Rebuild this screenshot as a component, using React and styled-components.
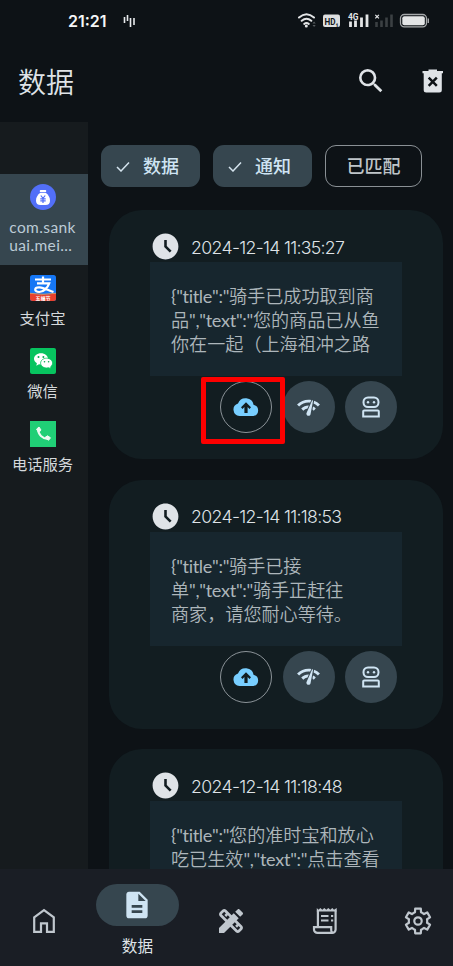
import React from "react";
import styled, { createGlobalStyle } from "styled-components";
import {
  MdSearch,
  MdAccessTimeFilled,
  MdNetworkCheck,
  MdDescription,
  MdDesignServices,
} from "react-icons/md";

const Global = createGlobalStyle`
  * { box-sizing: border-box; }
  body { margin: 0; background: #0d1216; overflow: hidden; }
  svg { display: block; flex: none; }
`;

const Screen = styled.div`
  width: 453px;
  height: 966px;
  display: flex;
  flex-direction: column;
  overflow: hidden;
  background: #0d1216;
  color: #dfe3e7;
  font-family: "Lato", "Noto Sans CJK SC", sans-serif;
  font-weight: 400;
  font-kerning: none;
`;

const StatusBar = styled.div`
  height: 42px;
  flex: none;
  display: flex;
  align-items: center;
  padding: 0 24px 0 68px;
`;

const Clock = styled.span`
  font: 600 16px/20px "Inter", sans-serif;
  letter-spacing: 0;
  color: #f4f6f7;
  width: 55px;
`;

const StatusIcons = styled.div`
  margin-left: auto;
  display: flex;
  align-items: center;
`;

const Header = styled.header`
  height: 80px;
  flex: none;
  display: flex;
  align-items: center;
  padding: 0 9px 0 18px;
`;

const Title = styled.h1`
  margin: 0;
  padding-bottom: 3px;
  font-size: 28px;
  line-height: 40px;
  font-weight: 350;
  font-family: "Noto Sans CJK SC", sans-serif;
  flex: 1;
`;

const Actions = styled.div`
  display: flex;
  align-items: center;
  gap: 35px;
  padding-bottom: 3px;
  color: #dfe3e7;
`;

const Body = styled.div`
  flex: 1;
  min-height: 0;
  display: flex;
`;

const Sidebar = styled.aside`
  width: 88px;
  flex: none;
  padding-top: 52px;
  background: #161b1e;
`;

const AppItem = styled.div`
  height: ${(p) => (p.$active ? 91 : 73)}px;
  padding-top: 10px;
  display: flex;
  flex-direction: column;
  align-items: center;
  gap: 8px;
  padding-right: 3px;
  background: ${(p) => (p.$active ? "#36464f" : "transparent")};
`;

const AppLabel = styled.div`
  font-size: ${(p) => (p.$latin ? 15.5 : 15.3)}px;
  line-height: 18px;
  letter-spacing: ${(p) => (p.$latin ? 0.4 : 0)}px;
  color: ${(p) => (p.$latin ? "#bccbd6" : "#d5d9dc")};
  white-space: pre;
`;

const Content = styled.main`
  flex: 1;
  min-width: 0;
  overflow: hidden;
  padding: 23px 10px 0 13px;
`;

const Chips = styled.div`
  display: flex;
  gap: 13px;
`;

const Chip = styled.div`
  width: ${(p) => (p.$selected ? 99 : 97)}px;
  height: 42px;
  display: flex;
  align-items: center;
  justify-content: ${(p) => (p.$selected ? "flex-start" : "center")};
  gap: 13px;
  padding-left: ${(p) => (p.$selected ? 15 : 0)}px;
  border-radius: 11px;
  border: ${(p) => (p.$selected ? "none" : "1px solid #8a9095")};
  background: ${(p) => (p.$selected ? "#36464f" : "transparent")};
  color: ${(p) => (p.$selected ? "#cfe4f3" : "#bfc5c9")};
  font-size: 18px;
  font-weight: 500;
  line-height: 24px;
`;

const Cards = styled.div`
  padding: 23px 0 0 8px;
  display: flex;
  flex-direction: column;
  gap: 20.6px;
`;

const Card = styled.article`
  height: 249px;
  flex: none;
  border-radius: 33px;
  background: #121d21;
  padding: 21px 41px 0;
`;

const CardHead = styled.div`
  height: 31px;
  display: flex;
  align-items: center;
  gap: 10px;
  color: #dfe3e7;
`;

const Time = styled.time`
  font-family: "Inter", sans-serif;
  font-weight: 300;
  font-size: 17.7px;
  line-height: 24px;
  letter-spacing: -0.7px;
  padding-top: 2px;
  white-space: nowrap;
`;

const Message = styled.div`
  height: 114px;
  padding: 22px 0 0 21px;
  background: #17262e;
  color: #adb6bb;
  font-size: 18.1px;
  font-weight: 350;
  line-height: 24px;
`;

const Line = styled.div`
  height: 24px;
  white-space: pre;
`;

const Latin = styled.span`
  font-weight: 400;
  letter-spacing: -0.32px;
`;

const Buttons = styled.div`
  display: flex;
  justify-content: flex-end;
  gap: 10.5px;
  padding: 5px 5px 0 0;
`;

const RoundButton = styled.div`
  position: relative;
  width: 52px;
  height: 52px;
  display: flex;
  align-items: center;
  justify-content: center;
  border-radius: 50%;
  border: ${(p) => (p.$outlined ? "1px solid #8b9398" : "none")};
  background: ${(p) => (p.$outlined ? "transparent" : "#36464f")};
  color: ${(p) => (p.$outlined ? "#78ceff" : "#cfe4f3")};
  z-index: ${(p) => (p.$outlined ? 1 : 0)};
`;

const Marker = styled.div`
  position: absolute;
  left: -20px;
  top: -5px;
  width: 84px;
  height: 67px;
  border: 5px solid #fd0000;
  border-radius: 2px;
`;

const Nav = styled.nav`
  height: 97px;
  flex: none;
  display: grid;
  grid-template-columns: repeat(5, 1fr);
  margin: 0 -12px 0 -3px;
  background: #1a1e25;
  color: #c0c7ce;
`;

const NavItem = styled.div`
  display: flex;
  flex-direction: column;
  align-items: center;
  padding-top: ${(p) => (p.$active ? 15 : 36)}px;
`;

const Pill = styled.div`
  width: 83px;
  height: 42px;
  display: flex;
  align-items: center;
  justify-content: center;
  border-radius: 21px;
  background: #36464f;
  color: #cfe4f3;
`;

const NavLabel = styled.div`
  margin-top: 9px;
  font-size: 15.6px;
  line-height: 22px;
  color: #dfe3e7;
`;

const Vibrate = () => (
  <svg width="12" height="14" viewBox="0 0 12 14" stroke="#e8ebed" strokeWidth="1.6">
    <path d="M1.500 3v6M4.500 1v6M7.500 4v9M11 4v7" />
  </svg>
);

const StatusGlyphs = () => (
  <svg width="134" height="18" viewBox="295 12.500 134 18">
    <g fill="none" stroke="#e3e5e6" strokeWidth="2" strokeLinecap="round">
      <path d="M299 18q7.500-6.500 15 0M301.700 21.300q4.800-4.200 9.600 0M304.200 24.400q2.300-1.900 4.600 0" />
    </g>
    <circle cx="306.300" cy="26.500" r="1.500" fill="#e3e5e6" />
    <path d="M312.500 24l1.600-2 1.600 2zM312.500 25.500l1.600 2 1.600-2z" fill="#555a5d" />
    <rect x="323" y="15" width="17" height="12.500" rx="2" fill="#dedfe0" />
    <text x="324.500" y="25" fontSize="9.500" fontWeight="700" fontFamily="Roboto, sans-serif" fill="#101519" textLength="14" lengthAdjust="spacingAndGlyphs">HD₁</text>
    <text x="348" y="20.300" fontSize="8.500" fontWeight="700" fontFamily="Roboto, sans-serif" fill="#e3e5e6" textLength="10.500" lengthAdjust="spacingAndGlyphs">4G</text>
    <path d="M350.500 22v5.500M355.500 21v6.500M361.500 18v9.500M367 15v12.500" stroke="#e3e5e6" strokeWidth="2.800" />
    <path d="M376.500 22.500v5M381.500 21v6.500M386.500 18v9.500M391.500 15v12.500" stroke="#3b4043" strokeWidth="2.600" />
    <path d="M375.300 15.300l3.600 3.600M378.900 15.300l-3.600 3.600" stroke="#e3e5e6" strokeWidth="1.200" />
    <rect x="400.500" y="15" width="26" height="12.300" rx="3.800" fill="none" stroke="#a6a9ab" strokeWidth="1.300" />
    <rect x="402.300" y="16.700" width="22.500" height="9" rx="2" fill="#e3e5e6" />
    <path d="M428.300 19v4.500" stroke="#a6a9ab" strokeWidth="1.400" />
  </svg>
);

const TrashX = () => (
  <svg width="22" height="24" viewBox="0 0 22 24">
    <path fill="currentColor" fillRule="evenodd" d="M.5 2h6V.6h8.500V2h6v2.200h-1.200V21a2.500 2.500 0 0 1-2.500 2.500H4.200A2.500 2.500 0 0 1 1.700 21V4.200H.5z" />
    <path d="M6.700 8.700l8.100 8.100M14.800 8.700l-8.100 8.100" stroke="#0d1216" strokeWidth="2.500" />
  </svg>
);

const Check = () => (
  <svg width="14" height="11" viewBox="0 0 14 11" fill="none" stroke="#d5e4ee" strokeWidth="1.500">
    <path d="M1 6l4 4 8-8.500" />
  </svg>
);

const CloudUp = () => (
  <svg width="26" height="18" viewBox="0 0 26 18">
    <path fill="currentColor" d="M6.500 18A6.400 6.400 0 0 1 5 5.500 8.200 8.200 0 0 1 20.700 7 5.600 5.600 0 0 1 20.500 18z" />
    <path fill="#121d21" d="M13 4.300l5 5-1.500 1.600-1.900-1.900v6h-3.200V9l-1.900 1.900L8 9.300z" />
  </svg>
);

const Robot = () => (
  <svg width="18" height="22" viewBox="0 0 18 22" fill="none" stroke="currentColor" strokeWidth="2">
    <rect x="1.500" y="1.500" width="15" height="9.500" rx="4.500" />
    <path d="M1.200 20.500v-5a1 1 0 0 1 1-1h13.600a1 1 0 0 1 1 1v5z" />
    <circle cx="6" cy="6.200" r="1.200" fill="currentColor" stroke="none" />
    <circle cx="12" cy="6.200" r="1.200" fill="currentColor" stroke="none" />
  </svg>
);

const House = () => (
  <svg width="32" height="32" viewBox="0 0 32 32" fill="none" stroke="currentColor" strokeWidth="2.200">
    <path d="M6.200 12.300L16 5.200l9.800 7.100v14.500H19v-8.500h-6v8.500H6.200z" />
  </svg>
);

const Receipt = () => (
  <svg width="32" height="32" viewBox="0 0 32 32" fill="none" stroke="currentColor" strokeWidth="2.200">
    <path d="M8.900 22.500V5.500M26.600 5.500v19a3.400 3.400 0 0 1-3.400 3.400H8.500a3.500 3.500 0 0 1-3.500-3.500v-2.200h17.200v3a2.600 2.600 0 0 0 1.500 2.600" />
    <path d="M7.800 3l1.700 1.700L11.300 3l2 1.700L15.300 3l2 1.700L19.300 3l2 1.700 2-1.700 1.700 1.700L27.700 3v3.500H7.800z" fill="currentColor" stroke="none" />
    <path d="M12 11h7.500M12 15.500h7.500M22 11h2.200M22 15.500h2.200" strokeWidth="2" />
  </svg>
);

const gearPoints = [0, 60, 120, 180, 240, 300]
  .flatMap((a) => [[a - 30, 9.2], [a - 19, 9.2], [a - 13, 12.600], [a + 13, 12.600], [a + 19, 9.2]])
  .map(([deg, r]) => {
    const t = (deg * Math.PI) / 180;
    return `${(16 + r * Math.sin(t)).toFixed(2)},${(16 - r * Math.cos(t)).toFixed(2)}`;
  })
  .join(" ");

const Gear = () => (
  <svg width="32" height="32" viewBox="0 0 32 32" fill="none" stroke="currentColor" strokeWidth="2.200" strokeLinejoin="round">
    <polygon points={gearPoints} />
    <circle cx="16" cy="16" r="3.700" />
  </svg>
);

const MoneyBag = () => (
  <svg width="26" height="26" viewBox="0 0 26 26">
    <circle cx="13" cy="13" r="13" fill="#526ff8" />
    <rect x="9.800" y="6" width="6.400" height="2.300" rx=".8" fill="#fff" />
    <path fill="#fff" d="M10 9h6c2.500 2 4 4.500 4 7.500 0 3-1.500 4.500-4.500 4.500h-5C7.500 21 6 19.500 6 16.500 6 13.500 7.500 11 10 9z" />
    <path d="M10.800 11.500l2.200 2.800 2.200-2.800M13 14v5M10.300 14.800h5.400M10.300 16.800h5.400" stroke="#526ff8" strokeWidth="1.200" fill="none" />
  </svg>
);

const Alipay = () => (
  <svg width="26" height="26" viewBox="0 0 26 26">
    <rect width="26" height="26" rx="2.500" fill="#1677f5" />
    <path d="M13 1.500v7M5 4.500h16M7 8.300h12.200c-1.600 4.500-5.500 8.700-10 8.700-5.500 0-5.200-5 .3-4.700 4.200.3 8.500 2.800 14 4.700" fill="none" stroke="#fff" strokeWidth="2.200" />
    <path d="M0 18.500q13 2 26 0v5a2.500 2.500 0 0 1-2.500 2.500h-21A2.500 2.500 0 0 1 0 23.500z" fill="#e8412d" />
    <path d="M0 18.300q13 2 26 0" fill="none" stroke="#f2a34b" strokeWidth=".8" />
    <text x="5.500" y="24.800" fontSize="5" fontWeight="700" fill="#fff" fontFamily="Noto Sans CJK SC, sans-serif">五福节</text>
  </svg>
);

const WeChat = () => (
  <svg width="26" height="26" viewBox="0 0 26 26">
    <rect width="26" height="26" rx="2" fill="#07c45f" />
    <path fill="#fff" d="M11 5.200c4 0 7 2.500 7 5.600s-3 5.600-7 5.600l-2-.2-2.700 1.500.6-2.500C5.100 14.200 4 12.700 4 10.800c0-3.100 3-5.600 7-5.600z" />
    <path fill="#fff" stroke="#07c45f" strokeWidth=".8" d="M16.600 10.200c3.300 0 6 2.200 6 4.900 0 1.500-.8 2.800-2 3.700l.4 2-2.300-1.100-2.100.3c-3.300 0-6-2.200-6-4.900s2.700-4.900 6-4.900z" />
    <g fill="#07a952">
      <circle cx="8.500" cy="9" r="1" />
      <circle cx="13.400" cy="9" r="1" />
      <circle cx="14.500" cy="13.800" r=".8" />
      <circle cx="18.600" cy="13.800" r=".8" />
    </g>
  </svg>
);

const Phone = () => (
  <svg width="26" height="26" viewBox="0 0 26 26">
    <rect width="26" height="26" fill="#20cf76" />
    <path d="M8 8c0 5.500 4.500 9.800 10 10" fill="none" stroke="#eefaf3" strokeWidth="2" />
    <path d="M6.500 8.200L9 6l2 3-2.200 2.500zM15 16.500l2.500-1.700 3 2-2 2.500z" fill="#eefaf3" stroke="#eefaf3" strokeWidth="1" strokeLinejoin="round" />
  </svg>
);

const apps = [
  { icon: <MoneyBag />, label: "com.sank\nuai.mei…", active: true },
  { icon: <Alipay />, label: "支付宝" },
  { icon: <WeChat />, label: "微信" },
  { icon: <Phone />, label: "电话服务" },
];

const records = [
  {
    time: "2024-12-14 11:35:27",
    lines: ['{"title":"骑手已成功取到商', '品","text":"您的商品已从鱼', "你在一起（上海祖冲之路"],
    marked: true,
  },
  {
    time: "2024-12-14 11:18:53",
    lines: ['{"title":"骑手已接', '单","text":"骑手正赶往', "商家，请您耐心等待。"],
  },
  {
    time: "2024-12-14 11:18:48",
    lines: ['{"title":"您的准时宝和放心', '吃已生效","text":"点击查看'],
  },
];

const MixedLine = ({ text }) => (
  <Line>
    {text.split(/([\x20-\x7e]+)/).map((part, i) =>
      i % 2 ? <Latin key={i}>{part}</Latin> : part
    )}
  </Line>
);

const RecordCard = ({ time, lines, marked }) => (
  <Card>
    <CardHead>
      <MdAccessTimeFilled size={31} />
      <Time>{time}</Time>
    </CardHead>
    <Message>
      {lines.map((line, i) => <MixedLine key={i} text={line} />)}
    </Message>
    <Buttons>
      <RoundButton $outlined>
        <CloudUp />
        {marked && <Marker />}
      </RoundButton>
      <RoundButton><MdNetworkCheck size={25} /></RoundButton>
      <RoundButton><Robot /></RoundButton>
    </Buttons>
  </Card>
);

export default function App() {
  return (
    <Screen>
      <Global />
      <StatusBar>
        <Clock>21:21</Clock>
        <Vibrate />
        <StatusIcons><StatusGlyphs /></StatusIcons>
      </StatusBar>
      <Header>
        <Title>数据</Title>
        <Actions>
          <MdSearch size={32} />
          <TrashX />
        </Actions>
      </Header>
      <Body>
        <Sidebar>
          {apps.map((app) => (
            <AppItem key={app.label} $active={app.active}>
              {app.icon}
              <AppLabel $latin={app.active}>{app.label}</AppLabel>
            </AppItem>
          ))}
        </Sidebar>
        <Content>
          <Chips>
            <Chip $selected><Check />数据</Chip>
            <Chip $selected><Check />通知</Chip>
            <Chip>已匹配</Chip>
          </Chips>
          <Cards>
            {records.map((record) => <RecordCard key={record.time} {...record} />)}
          </Cards>
        </Content>
      </Body>
      <Nav>
        <NavItem><House /></NavItem>
        <NavItem $active>
          <Pill><MdDescription size={32} /></Pill>
          <NavLabel>数据</NavLabel>
        </NavItem>
        <NavItem><MdDesignServices size={32} /></NavItem>
        <NavItem><Receipt /></NavItem>
        <NavItem><Gear /></NavItem>
      </Nav>
    </Screen>
  );
}
